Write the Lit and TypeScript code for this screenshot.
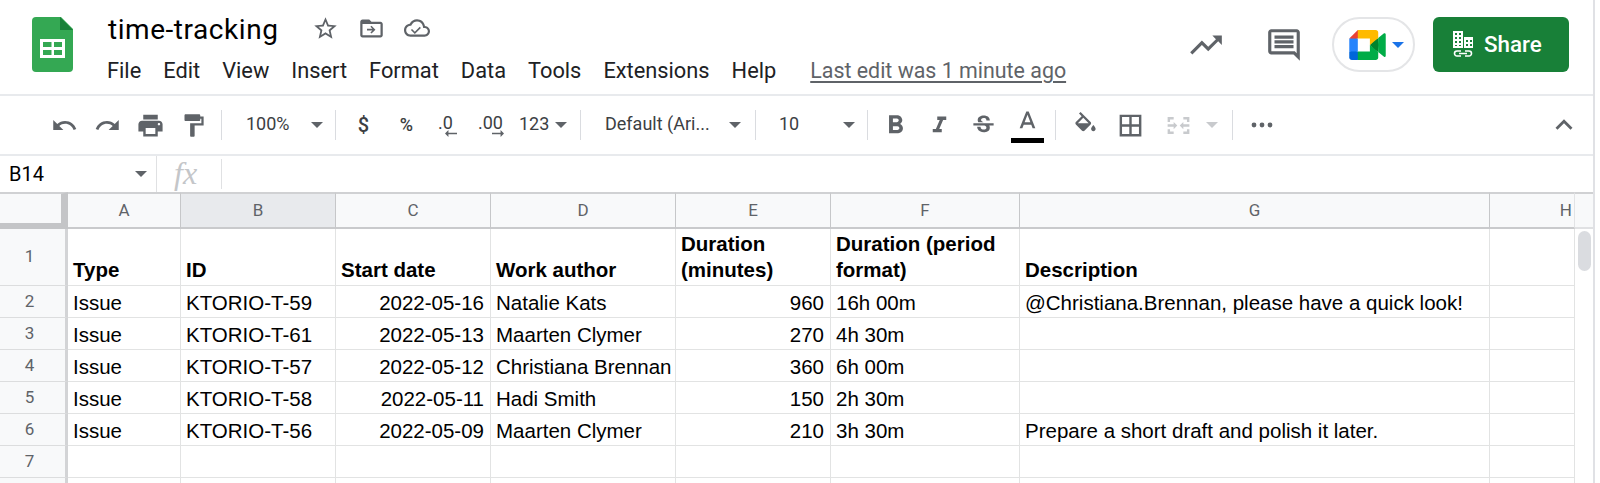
import { LitElement, html, css, svg } from "lit";
import { customElement } from "lit/decorators.js";

const icon = (d: string, size = 30, fill = "#5f6368", vb = "0 0 24 24") =>
  html`<svg width=${size} height=${size} viewBox=${vb} fill=${fill}><path d=${d}></path></svg>`;

const P = {
  star: "M22 9.24l-7.19-.62L12 2 9.19 8.63 2 9.24l5.46 4.73L5.82 21 12 17.27 18.18 21l-1.63-7.03L22 9.24zM12 15.4l-3.76 2.27 1-4.28-3.32-2.88 4.38-.38L12 6.1l1.71 4.04 4.38.38-3.32 2.88 1 4.28L12 15.4z",
  move: "M20 6h-8l-2-2H4c-1.1 0-2 .9-2 2v12c0 1.1.9 2 2 2h16c1.1 0 2-.9 2-2V8c0-1.1-.9-2-2-2zm0 12H4V8h16v10zM12 9.5l-1 1 1.8 1.75H8v1.5h4.8L11 15.5l1 1 3.5-3.5z",
  cloud: "M19.35 10.04C18.67 6.59 15.64 4 12 4 9.11 4 6.6 5.64 5.35 8.04 2.34 8.36 0 10.91 0 14c0 3.31 2.69 6 6 6h13c2.76 0 5-2.24 5-5 0-2.64-2.05-4.78-4.65-4.96zM19 18H6c-2.21 0-4-1.79-4-4 0-2.05 1.53-3.76 3.56-3.97l1.07-.11.5-.95C8.08 7.14 9.94 6 12 6c2.62 0 4.88 1.86 5.39 4.43l.3 1.5 1.53.11c1.56.1 2.78 1.41 2.78 2.96 0 1.65-1.35 3-3 3zm-9-2.5l-2.6-2.6-1.05 1.05L10 17.6l5.6-5.6-1.05-1.05z",
  trend: "M16 6l2.29 2.29-4.88 4.88-4-4L2 16.59 3.41 18l6-6 4 4 6.3-6.29L22 12V6z",
  comment: "M21.99 4c0-1.1-.89-2-1.99-2H4c-1.1 0-2 .9-2 2v12c0 1.1.9 2 2 2h14l4 4-.01-18zM20 4v13.17L18.83 16H4V4h16zM6 12h12v2H6zm0-3h12v2H6zm0-3h12v2H6z",
  undo: "M12.5 8c-2.65 0-5.05.99-6.9 2.6L2 7v9h9l-3.62-3.62c1.39-1.16 3.16-1.88 5.12-1.88 3.54 0 6.55 2.31 7.6 5.5l2.37-.78C21.08 11.03 17.15 8 12.5 8z",
  redo: "M18.4 10.6C16.55 8.99 14.15 8 11.5 8c-4.65 0-8.58 3.03-9.96 7.22L3.9 16c1.05-3.19 4.05-5.5 7.6-5.5 1.95 0 3.73.72 5.12 1.88L13 16h9V7l-3.6 3.6z",
  print: "M19 8H5c-1.66 0-3 1.34-3 3v6h4v4h12v-4h4v-6c0-1.66-1.34-3-3-3zm-3 11H8v-5h8v5zm3-7c-.55 0-1-.45-1-1s.45-1 1-1 1 .45 1 1-.45 1-1 1zm-1-9H6v4h12V3z",
  paint: "M18 4V3c0-.55-.45-1-1-1H5c-.55 0-1 .45-1 1v4c0 .55.45 1 1 1h12c.55 0 1-.45 1-1V6h1v4H9v11c0 .55.45 1 1 1h2c.55 0 1-.45 1-1v-9h8V4h-3z",
  bold: "M15.6 10.79c.97-.67 1.65-1.77 1.65-2.79 0-2.26-1.75-4-4-4H7v14h7.04c2.09 0 3.71-1.7 3.71-3.79 0-1.52-.86-2.82-2.15-3.42zM10 6.5h3c.83 0 1.5.67 1.5 1.5s-.67 1.5-1.5 1.5h-3v-3zm3.5 9H10v-3h3.5c.83 0 1.5.67 1.5 1.5s-.67 1.5-1.5 1.5z",
  italic: "M10 4v3h2.21l-3.42 8H6v3h8v-3h-2.21l3.42-8H18V4z",
  strike: "M6.85 7.08C6.85 4.37 9.45 3 12.24 3c1.64 0 3 .49 3.9 1.28.77.65 1.46 1.73 1.46 3.24h-3.01c0-.31-.05-.59-.15-.85-.29-.86-1.2-1.28-2.25-1.28-1.86 0-2.34 1.02-2.34 1.7 0 .48.25.88.74 1.21.38.25.77.48 1.41.7H7.39c-.21-.34-.54-.89-.54-1.92zM21 12v-2H3v2h9.62c1.15.45 1.96.75 1.96 1.97 0 1-.81 1.67-2.28 1.67-1.54 0-2.93-.54-2.93-2.51H6.4c0 .55.08 1.13.24 1.58.81 2.29 3.29 3.3 5.67 3.3 2.27 0 5.3-.89 5.3-4.05 0-.3-.01-1.16-.48-1.96H21z",
  textA: "M11 2L5.5 16h2.25l1.12-3h6.25l1.12 3h2.25L13 2h-2zm-1.38 9L12 4.67 14.38 11H9.62z",
  fill: "M16.56 8.94L7.62 0 6.21 1.41l2.38 2.38-5.15 5.15c-.59.59-.59 1.54 0 2.12l5.5 5.5c.29.29.68.44 1.06.44s.77-.15 1.06-.44l5.5-5.5c.59-.58.59-1.53 0-2.12zM5.21 10L10 5.21 14.79 10H5.21zM19 11.5s-2 2.17-2 3.5c0 1.1.9 2 2 2s2-.9 2-2c0-1.33-2-3.5-2-3.5z",
  borders: "M3 3v18h18V3H3zm8 16H5v-6h6v6zm0-8H5V5h6v6zm8 8h-6v-6h6v6zm0-8h-6V5h6v6z",
  merge: "M3 5h5v2H5v2H3V5zm13 0h5v4h-2V7h-3V5zM3 15h2v2h3v2H3v-4zm16 0h2v4h-5v-2h3v-2zM3 11h5V9l3 3-3 3v-2H3v-2zm18 0v2h-5v2l-3-3 3-3v2h5z",
  chevron: "M7.41 15.41L12 10.83l4.59 4.58L18 14l-6-6-6 6z",
};

const meet = svg`
  <path fill="#00832d" d="M49.5 36l8.53 9.75 11.47 7.33 2-17.02-2-16.64-11.69 6.44z"></path>
  <path fill="#0066da" d="M0 51.5V66c0 3.315 2.685 6 6 6h14.5l3-10.96-3-9.54-9.95-3z"></path>
  <path fill="#e94235" d="M20.5 0L0 20.5l10.55 3 9.95-3 2.95-9.41z"></path>
  <path fill="#2684fc" d="M20.5 20.5H0v31h20.5z"></path>
  <path fill="#00ac47" d="M82.6 8.68L69.5 19.42v33.66l13.16 10.79c1.97 1.54 4.85.135 4.85-2.37V11c0-2.535-2.945-3.925-4.91-2.32zM49.5 36v15.5h-29V72h43c3.315 0 6-2.685 6-6V53.08z"></path>
  <path fill="#ffba00" d="M63.5 0h-43v20.5h29V36l20-16.57V6c0-3.315-2.685-6-6-6z"></path>`;

const COLS = ["A", "B", "C", "D", "E", "F", "G", "H"];
type Row = [string, string, string, string, string, string, string];
const ROWS: Row[] = [
  ["Issue", "KTORIO-T-59", "2022-05-16", "Natalie Kats", "960", "16h 00m", "@Christiana.Brennan, please have a quick look!"],
  ["Issue", "KTORIO-T-61", "2022-05-13", "Maarten Clymer", "270", "4h 30m", ""],
  ["Issue", "KTORIO-T-57", "2022-05-12", "Christiana Brennan", "360", "6h 00m", ""],
  ["Issue", "KTORIO-T-58", "2022-05-11", "Hadi Smith", "150", "2h 30m", ""],
  ["Issue", "KTORIO-T-56", "2022-05-09", "Maarten Clymer", "210", "3h 30m", "Prepare a short draft and polish it later."],
  ["", "", "", "", "", "", ""],
  ["", "", "", "", "", "", ""],
];
const HEAD = ["Type", "ID", "Start date", "Work author", "Duration (minutes)", "Duration (period format)", "Description", ""];

@customElement("app-root")
export class AppRoot extends LitElement {
  static styles = css`
    :host { display: block; width: 1600px; height: 483px; overflow: hidden; background: #fff; font-family: Roboto, "Liberation Sans", sans-serif; }
    * { box-sizing: border-box; }
    .page { width: 1595px; height: 483px; display: flex; flex-direction: column; }
    .top { height: 94px; display: flex; padding-left: 32px; flex: none; }
    .logo { width: 41px; height: 55px; margin-top: 17px; flex: none; }
    .titles { margin-left: 35px; flex: none; width: 990px; }
    .titlerow { height: 44px; padding-top: 12px; display: flex; align-items: center; }
    .title { font-size: 28px; letter-spacing: 0.55px; color: #000; width: 204px; line-height: 38px; margin-top: 4px; }
    .titlerow svg { flex: none; }
    .ti { width: 46px; display: flex; justify-content: flex-start; }
    .menu { display: flex; align-items: center; height: 34px; margin-top: 9px; font-size: 21.8px; color: #202124; margin-left: -1px; }
    .menu span { margin-right: 22px; }
    .menu .last { color: #5f6368; font-size: 21.4px; text-decoration: underline; text-underline-offset: 3px; margin-left: 12px; margin-right: 0; white-space: nowrap; }
    .right { flex: 1; display: flex; align-items: flex-start; padding-top: 17px; }
    .ric { height: 55px; display: flex; align-items: center; }
    .trend { margin-left: 89px; width: 78px; }
    .cmt { width: 67px; }
    .pill { width: 83px; height: 55px; border: 2px solid #e4e5e7; border-radius: 28px; display: flex; align-items: center; padding-left: 15px; flex: none; }
    .caret { width: 0; height: 0; border-left: 6px solid transparent; border-right: 6px solid transparent; border-top: 6px solid #5f6368; flex: none; }
    .pill .caret { border-top-color: #1a73e8; margin-left: 6px; }
    .share { width: 136px; height: 55px; margin-left: 18px; background: #188038; border-radius: 6px; color: #fff; display: flex; align-items: center; padding: 0 0 2px 19px; gap: 10px; font-size: 22.4px; font-weight: 500; flex: none; }
    .tools { height: 62px; flex: none; border-top: 2px solid #e8eaed; border-bottom: 2px solid #e8eaed; display: flex; align-items: center; padding-left: 43px; color: #3c4043; font-size: 18px; }
    .tb { width: 43px; display: flex; justify-content: center; align-items: center; flex: none; }
    .sep { width: 1px; height: 30px; background: #dadce0; flex: none; }
    .drop { display: flex; align-items: center; flex: none; }
    .txt { font-size: 18px; color: #3c4043; margin-top: -3px; }
    .mono { font-size: 18px; color: #3c4043; line-height: 1; }
    .arrowed { display: flex; flex-direction: column; align-items: center; line-height: 18px; font-size: 18px; color: #3c4043; }
    .arrowed svg { margin-top: -2px; }
    .arrow-l { margin-left: 11px; }
    .arrow-r { margin-left: 14px; }
    .colorbar { width: 33px; height: 5px; background: #000; flex: none; }
    .colorbtn { display: flex; flex-direction: column; align-items: center; justify-content: flex-end; height: 44px; margin-top: -8px; }
    .colorbtn svg { margin-bottom: 0; }
    .fbar { height: 36px; flex: none; display: flex; align-items: center; }
    .namebox { width: 157px; height: 100%; padding-left: 9px; display: flex; align-items: center; justify-content: space-between; padding-right: 9px; border-right: 1px solid #e0e1e3; font-size: 20px; color: #000; }
    .fx { width: 65px; height: 30px; font-family: "Liberation Serif", serif; font-style: italic; font-size: 32px; color: #c4c6c9; padding-left: 17px; line-height: 28px; border-right: 1px solid #e0e1e3; }
    .sheet { flex: 1; min-height: 0; overflow: hidden; display: flex; }
    .grid { display: grid; grid-template-columns: 68px 113px 155px 155px 185px 155px 189px 470px 85px; grid-template-rows: 37px 57px repeat(7, 32px); flex: none; }
    .ch { background: #f8f9fa; border-top: 2px solid #d0d1d3; border-bottom: 2px solid #c9cacc; border-right: 1px solid #c6c7c9; color: #5f6368; font-size: 17px; display: flex; align-items: center; justify-content: center; padding-bottom: 1px; }
    .ch.sel { background: #e8eaed; }
    .ch.h { justify-content: flex-end; padding-right: 2px; border-right: 1px solid #e2e3e5; }
    .corner { background: #f8f9fa; border-top: 2px solid #d0d1d3; border-right: 7px solid #c4c5c7; border-bottom: 6px solid #c4c5c7; }
    .rh { background: #f8f9fa; border-right: 3px solid #d3d4d6; border-bottom: 1px solid #dcddde; color: #5f6368; font-size: 17px; display: flex; align-items: center; justify-content: center; padding-right: 6px; padding-bottom: 1px; }
    .rh.first { padding-bottom: 3px; }
    .c { border-right: 1px solid #e2e3e3; border-bottom: 1px solid #e2e3e3; padding: 2px 6px 0 5px; font-family: "Liberation Sans", Arial, sans-serif; font-size: 20.5px; color: #000; display: flex; align-items: center; white-space: nowrap; overflow: hidden; }
    .c.num { justify-content: flex-end; }
    .c.hd { font-weight: 700; align-items: flex-end; line-height: 25.5px; white-space: normal; padding: 0 6px 3px 5px; }
    .rail { width: 19px; flex: none; }
    .railhead { height: 37px; background: #f8f9fa; border-top: 2px solid #d0d1d3; border-bottom: 2px solid #e0e1e3; }
    .thumb { width: 13px; height: 40px; background: #dadce0; border-radius: 7px; margin: 2px 0 0 3px; }
    .edge { border-right: 2px solid #e0e1e5; }
  `;

  private drop(label: string, w: number, caretAt: number) {
    return html`<div class="drop" style="width:${w}px"><span class="txt" style="width:${caretAt}px">${label}</span><span class="caret"></span></div>`;
  }

  render() {
    return html`
      <div class="page edge">
        <div class="top">
          <svg class="logo" viewBox="0 0 41 55">
            <path fill="#34a853" d="M4 0h25l12 12v39a4 4 0 0 1-4 4H4a4 4 0 0 1-4-4V4a4 4 0 0 1 4-4z"></path>
            <path fill="#188038" d="M28 0l13 13H28z"></path>
            <path fill="#fff" d="M8 22h25v19H8zM11 25v5h8.5v-5zM22 25v5h8v-5zM11 33v5h8.5v-5zM22 33v5h8v-5z" fill-rule="evenodd"></path>
          </svg>
          <div class="titles">
            <div class="titlerow">
              <span class="title">time-tracking</span>
              <span class="ti">${icon(P.star, 27)}</span>
              <span class="ti">${icon(P.move, 27)}</span>
              <span class="ti">${icon(P.cloud, 26)}</span>
            </div>
            <div class="menu">
              <span>File</span><span>Edit</span><span>View</span><span>Insert</span><span>Format</span><span>Data</span><span>Tools</span><span>Extensions</span><span>Help</span>
              <span class="last">Last edit was 1 minute ago</span>
            </div>
          </div>
          <div class="right">
            <div class="ric trend">${icon(P.trend, 38)}</div>
            <div class="ric cmt">${icon(P.comment, 38)}</div>
            <div class="pill">
              <svg width="37" height="30" viewBox="0 0 87.5 72">${meet}</svg>
              <span class="caret"></span>
            </div>
            <div class="share">
              <svg width="22" height="27" viewBox="0 0 22 27" fill="#fff">
                <path fill-rule="evenodd" d="M1 1h10v17H1zM3 3v2h2V3zM7 3v2h2V3zM3 7v2h2V7zM7 7v2h2V7zM3 11v2h2v-2zM7 11v2h2v-2zM3 15v1h2v-1zM7 15v1h2v-1zM12 7h9v11h-9zM14 10v2h2v-2zM18 10v2h2v-2zM14 14v2h2v-2zM18 14v2h2v-2z"></path>
                <path fill="none" stroke="#fff" stroke-width="1.6" d="M9 21H5a2.4 2.4 0 0 0 0 5h4M13 21h4a2.4 2.4 0 0 1 0 5h-4M7 23.5h8"></path>
              </svg>
              Share
            </div>
          </div>
        </div>
        <div class="tools">
          <span class="tb">${icon(P.undo, 27)}</span>
          <span class="tb">${icon(P.redo, 27)}</span>
          <span class="tb">${icon(P.print, 29)}</span>
          <span class="tb">${icon(P.paint, 27)}</span>
          <span class="sep" style="margin-left:6px"></span>
          <span style="margin-left:24px">${this.drop("100%", 81, 65)}</span>
          <span class="sep" style="margin-left:8px"></span>
          <span class="tb mono" style="margin-left:6px;font-weight:500;font-size:20px">$</span>
          <span class="tb mono" style="font-weight:500">%</span>
          <span class="tb arrowed" style="width:35px"><span>.0</span><svg class="arrow-l" width="12" height="7" viewBox="0 0 14 8" fill="#5f6368"><path d="M14 3H4V0L0 4l4 4V5h10z"></path></svg></span>
          <span class="tb arrowed" style="width:55px"><span>.00</span><svg class="arrow-r" width="12" height="7" viewBox="0 0 14 8" fill="#5f6368"><path d="M0 3h10V0l4 4-4 4V5H0z"></path></svg></span>
          <span class="drop" style="margin-left:1px"><span class="txt" style="width:36px">123</span><span class="caret"></span></span>
          <span class="sep" style="margin-left:13px"></span>
          <span style="margin-left:24px">${this.drop("Default (Ari...", 136, 124)}</span>
          <span class="sep" style="margin-left:14px"></span>
          <span style="margin-left:23px">${this.drop("10", 76, 64)}</span>
          <span class="sep" style="margin-left:12px"></span>
          <span class="tb" style="margin-left:6px">${icon(P.bold, 31)}</span>
          <span class="tb" style="margin-left:1px">${icon(P.italic, 27)}</span>
          <span class="tb" style="margin-left:1px">${icon(P.strike, 27)}</span>
          <span class="tb colorbtn" style="margin-left:1px">${icon(P.textA, 29)}<span class="colorbar"></span></span>
          <span class="sep" style="margin-left:6px"></span>
          <span class="tb" style="margin-left:8px">${icon(P.fill, 27)}</span>
          <span class="tb" style="width:47px">${icon(P.borders, 29)}</span>
          <span class="tb" style="width:43px;margin-left:3px">${icon(P.merge, 29, "#c8cacd")}</span>
          <span class="caret" style="border-top-color:#c8cacd;margin-left:6px"></span>
          <span class="sep" style="margin-left:14px"></span>
          <span class="tb" style="margin-left:8px;width:42px"><svg width="24" height="6" viewBox="0 0 24 6" fill="#5f6368"><circle cx="4" cy="3" r="2.4"></circle><circle cx="12" cy="3" r="2.4"></circle><circle cx="20" cy="3" r="2.4"></circle></svg></span>
          <span class="tb" style="margin-left:259px;width:43px">${icon(P.chevron, 34)}</span>
        </div>
        <div class="fbar">
          <div class="namebox">B14<span class="caret"></span></div>
          <div class="fx">fx</div>
        </div>
        <div class="sheet">
          <div class="grid">
            <div class="corner"></div>
            ${COLS.map((c) => html`<div class="ch ${c === "B" ? "sel" : ""} ${c === "H" ? "h" : ""}">${c}</div>`)}
            <div class="rh first">1</div>
            ${HEAD.map((h) => html`<div class="c hd">${h}</div>`)}
            ${ROWS.map(
              (r, i) => html`
                <div class="rh">${i < 6 ? i + 2 : ""}</div>
                ${r.map((v, j) => html`<div class="c ${j === 2 || j === 4 ? "num" : ""}">${v}</div>`)}
                <div class="c"></div>
              `,
            )}
          </div>
          <div class="rail">
            <div class="railhead"></div>
            <div class="thumb"></div>
          </div>
        </div>
      </div>
    `;
  }
}
